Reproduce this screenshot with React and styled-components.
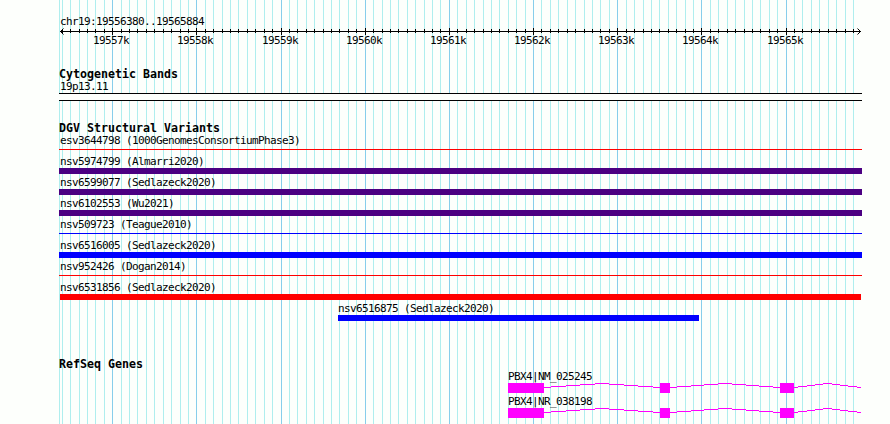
import React from 'react';
import styled, { createGlobalStyle } from 'styled-components';

const GlobalStyle = createGlobalStyle`
  body {
    margin: 0;
    background: #fdfffc;
  }
`;

const Browser = styled.main`
  position: relative;
  width: 890px;
  height: 424px;
  overflow: hidden;
  color: #000;
  font-family: 'DejaVu Sans Mono', 'Liberation Mono', monospace;
  font-size: 11px;
  line-height: 13px;
  letter-spacing: -0.622px;
  white-space: pre;
`;

const Grid = styled.svg`
  position: absolute;
  inset: 0;
`;

const Tracks = styled.div`
  position: relative;
  display: flex;
  flex-direction: column;
  width: 803px;
  padding: 15px 0 0 59px;
`;

const Position = styled.div`
  padding-left: 1px;
`;

const Ruler = styled.svg`
  display: block;
  width: 803px;
  height: 20px;
  overflow: visible;
`;

const Track = styled.section`
  display: flex;
  flex-direction: column;
  margin-top: ${(props) => props.$gap}px;
`;

const Title = styled.h2`
  margin: 0;
  height: 11px;
  font-size: 11.63px;
  font-weight: bold;
  line-height: 14px;
  letter-spacing: 0;
`;

const Band = styled.div`
  box-sizing: border-box;
  height: 8px;
  margin-top: 2px;
  border: solid #000;
  border-width: 1px 0;
  background: #fdfffc;
`;

const Feature = styled.div`
  display: flex;
  flex-direction: column;
  height: ${(props) => props.$height || 21}px;
  box-sizing: border-box;
  padding-top: 2px;
  padding-left: ${(props) => props.$start || 0}px;
`;

const Label = styled.span`
  padding-left: ${(props) => (props.$flush ? 0 : 1)}px;
`;

const Bar = styled.div`
  width: ${(props) => props.$width}px;
  height: ${(props) => (props.$thin ? 1 : 6)}px;
  margin-top: ${(props) => (props.$thin ? 2 : 0)}px;
  margin-left: ${(props) => props.$inset || 0}px;
  background: ${(props) => props.$color};
`;

const GeneModel = styled.svg`
  display: block;
  width: 354px;
  height: 10px;
  fill: #f0f;
`;

// Pixel position of a tick; index 0 is 19557k, every tenth one is a full kilobase.
const tickX = (index) => Math.floor(112.7 + index * 8.4175);
const ticks = Array.from({ length: 95 }, (_, i) => i - 6);
const isMajor = (index) => index % 10 === 0;

const variants = [
  { name: 'esv3644798 (1000GenomesConsortiumPhase3)', color: '#f00', thin: true },
  { name: 'nsv5974799 (Almarri2020)', color: '#4b0082' },
  { name: 'nsv6599077 (Sedlazeck2020)', color: '#4b0082' },
  { name: 'nsv6102553 (Wu2021)', color: '#4b0082' },
  { name: 'nsv509723 (Teague2010)', color: '#00f', thin: true },
  { name: 'nsv6516005 (Sedlazeck2020)', color: '#00f' },
  { name: 'nsv952426 (Dogan2014)', color: '#f00', thin: true },
  { name: 'nsv6531856 (Sedlazeck2020)', color: '#f00', inset: 1, width: 801 },
  { name: 'nsv6516875 (Sedlazeck2020)', color: '#00f', start: 279, width: 361 },
];

const genes = ['PBX4|NM_025245', 'PBX4|NR_038198'];
const exons = [[0, 36], [152, 10], [272, 14]];
const introns = [[36, 152], [162, 272], [286, 353]];

const GridLines = () => (
  <Grid width="890" height="424">
    <rect x="59" width="1" height="424" fill="#afeeee" />
    {ticks.map((i) => (
      <rect key={i} x={tickX(i)} width="1" height="424" fill={isMajor(i) ? '#87ceeb' : '#afeeee'} />
    ))}
  </Grid>
);

const Scale = () => (
  <Ruler viewBox="59 28 803 20">
    <rect x="60" y="31" width="801" height="1" />
    <path d="M63.5 28.5L60.5 31.5L63.5 34.5M857.5 28.5L860.5 31.5L857.5 34.5" fill="none" stroke="#000" />
    {ticks.map((i) => (
      <rect key={i} x={tickX(i)} y={isMajor(i) ? 28 : 29} width="1" height={isMajor(i) ? 7 : 4} />
    ))}
    {ticks.filter(isMajor).map((i) => (
      <text key={i} x={tickX(i) - 19} y="44">{`${19557 + i / 10}k`}</text>
    ))}
  </Ruler>
);

// Introns rise four pixels to the middle and come back down in whole-pixel steps.
const Intron = ({ from, to }) => {
  const step = (to - from) / 8;
  return Array.from({ length: 9 }, (_, i) => {
    const left = Math.round(Math.max(from, from + (i - 0.5) * step));
    const right = Math.round(Math.min(to, from + (i + 0.5) * step));
    return <rect key={i} x={left} y={Math.abs(i - 4)} width={right - left} height="1" />;
  });
};

const Gene = ({ name }) => (
  <Feature $start={449} $height={25}>
    <Label $flush>{name}</Label>
    <GeneModel>
      {introns.map(([from, to]) => <Intron key={from} from={from} to={to} />)}
      {exons.map(([x, width]) => <rect key={x} x={x} width={width} height="10" />)}
    </GeneModel>
  </Feature>
);

const App = () => (
  <>
    <GlobalStyle />
    <Browser>
      <GridLines />
      <Tracks>
        <Position>chr19:19556380..19565884</Position>
        <Scale />
        <Track $gap={19}>
          <Title>Cytogenetic Bands</Title>
          <Feature $height={13}>
            <Label>19p13.11</Label>
          </Feature>
          <Band />
        </Track>
        <Track $gap={20}>
          <Title>DGV Structural Variants</Title>
          {variants.map(({ name, color, thin, inset, start, width = 803 }) => (
            <Feature key={name} $start={start}>
              <Label $flush={Boolean(start)}>{name}</Label>
              <Bar $color={color} $thin={thin} $inset={inset} $width={width} />
            </Feature>
          ))}
        </Track>
        <Track $gap={36}>
          <Title>RefSeq Genes</Title>
          {genes.map((name) => <Gene key={name} name={name} />)}
        </Track>
      </Tracks>
    </Browser>
  </>
);

export default App;
